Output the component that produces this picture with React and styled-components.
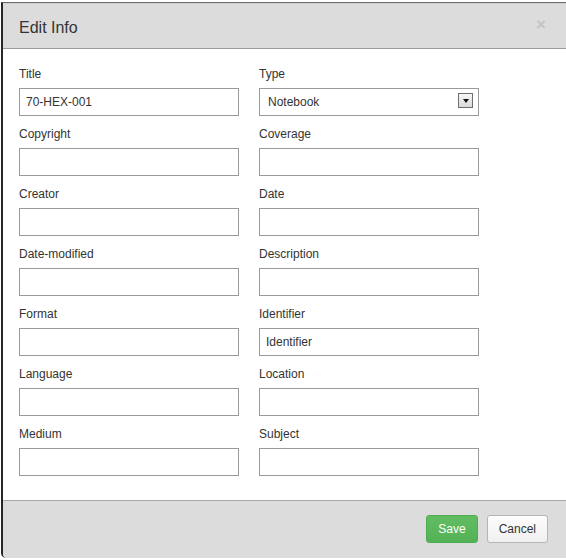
import React from 'react';
import styled, { createGlobalStyle } from 'styled-components';

const GlobalStyle = createGlobalStyle`
  html, body {
    margin: 0;
    background: #fff;
    overflow: hidden;
  }
  body {
    padding: 2px 0 0 1px;
    font-family: "Liberation Sans", Arial, sans-serif;
    color: #333;
  }
`;

const Modal = styled.div`
  width: 565px;
  box-sizing: border-box;
  border-top: 1px solid #6b6b6b;
  border-left: 2px solid #262626;
  border-radius: 0 0 0 5px;
  overflow: hidden;
  background: #fff;
`;

const Header = styled.div`
  display: flex;
  align-items: center;
  justify-content: space-between;
  height: 46px;
  box-sizing: border-box;
  padding: 0 20px 0 16px;
  background: #dcdcdc;
  border-top: 1px solid #cfcfcf;
  border-bottom: 1px solid #9c9c9c;
`;

const Title = styled.h3`
  margin: 0;
  padding-top: 3px;
  font-size: 16px;
  font-weight: normal;
  line-height: 20px;
  color: #333;
`;

const Close = styled.button`
  border: 0;
  background: none;
  padding: 0;
  margin-top: -4px;
  font-family: "Liberation Sans", Arial, sans-serif;
  font-size: 17px;
  font-weight: bold;
  line-height: 1;
  color: #c4c4c4;
  cursor: pointer;
`;

const Body = styled.div`
  display: grid;
  grid-template-columns: 220px 220px;
  column-gap: 20px;
  row-gap: 10px;
  padding: 17px 16px 24px;
`;

const Field = styled.div`
  display: flex;
  flex-direction: column;
`;

const Label = styled.label`
  font-size: 12px;
  line-height: 16px;
  margin-bottom: 6px;
  color: #333;
`;

const Input = styled.input`
  box-sizing: border-box;
  width: 220px;
  height: 28px;
  margin: 0;
  padding: 0 6px;
  border: 1px solid #9a9a9a;
  border-radius: 0;
  font-family: "Liberation Sans", Arial, sans-serif;
  font-size: 12px;
  color: #333;
  background: #fff;
  outline: none;
`;

const SelectWrap = styled.div`
  position: relative;
  width: 220px;
  height: 28px;
`;

const Select = styled.select`
  appearance: none;
  box-sizing: border-box;
  width: 100%;
  height: 28px;
  margin: 0;
  padding: 0 8px;
  border: 1px solid #9a9a9a;
  border-radius: 0;
  font-family: "Liberation Sans", Arial, sans-serif;
  font-size: 12px;
  color: #333;
  background: #fff;
  outline: none;
`;

const Arrow = styled.span`
  position: absolute;
  top: 5px;
  right: 6px;
  width: 15px;
  height: 15px;
  box-sizing: border-box;
  border: 1px solid #6e6e6e;
  background: linear-gradient(#f6f6f6, #d9d9d9);
  pointer-events: none;
  display: flex;
  align-items: center;
  justify-content: center;

  &::after {
    content: '';
    border-left: 3.5px solid transparent;
    border-right: 3.5px solid transparent;
    border-top: 4px solid #111;
    margin-top: 1px;
  }
`;

const Footer = styled.div`
  display: flex;
  justify-content: flex-end;
  gap: 9px;
  padding: 14px 18px 15px;
  background: #dcdcdc;
  border-top: 1px solid #a8a8a8;
`;

const Button = styled.button`
  box-sizing: border-box;
  height: 28px;
  padding: 0 11px;
  border-radius: 3px;
  font-family: "Liberation Sans", Arial, sans-serif;
  font-size: 12px;
  cursor: pointer;
  border: 1px solid ${p => (p.$primary ? '#4cae4c' : '#b5b5b5')};
  background: ${p => (p.$primary ? 'linear-gradient(#62bd62, #55b155)' : 'linear-gradient(#fdfdfd, #f0f0f0)')};
  color: ${p => (p.$primary ? '#fff' : '#333')};
`;

const fields = [
  ['Title', '70-HEX-001'],
  ['Type', null],
  ['Copyright', ''],
  ['Coverage', ''],
  ['Creator', ''],
  ['Date', ''],
  ['Date-modified', ''],
  ['Description', ''],
  ['Format', ''],
  ['Identifier', 'Identifier'],
  ['Language', ''],
  ['Location', ''],
  ['Medium', ''],
  ['Subject', ''],
];

export default function App() {
  return (
    <>
      <GlobalStyle />
      <Modal>
        <Header>
          <Title>Edit Info</Title>
          <Close aria-label="Close">×</Close>
        </Header>
        <Body>
          {fields.map(([name, value]) => (
            <Field key={name}>
              <Label>{name}</Label>
              {value === null ? (
                <SelectWrap>
                  <Select defaultValue="Notebook">
                    <option>Notebook</option>
                  </Select>
                  <Arrow />
                </SelectWrap>
              ) : (
                <Input defaultValue={value} />
              )}
            </Field>
          ))}
        </Body>
        <Footer>
          <Button $primary>Save</Button>
          <Button>Cancel</Button>
        </Footer>
      </Modal>
    </>
  );
}
